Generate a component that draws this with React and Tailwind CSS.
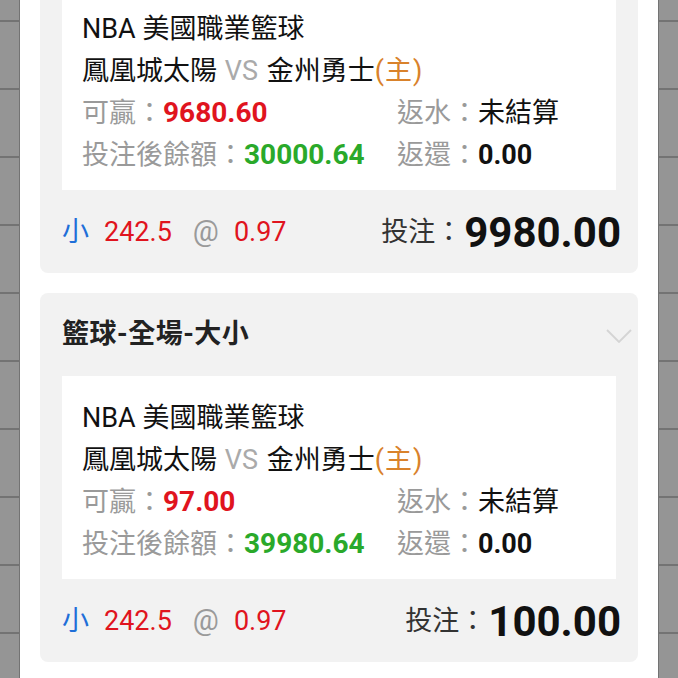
import React from "react";

const bets = [
	{ win: "9680.60", balance: "30000.64", stake: "9980.00" },
	{ win: "97.00", balance: "39980.64", stake: "100.00" },
];

const Strip = ({ side }) => (
	<div
		className={
			side === "left"
				? "w-[20px] h-full shrink-0 bg-[rgb(149,149,149)] border-r border-neutral-500"
				: "w-[20px] h-full shrink-0 bg-[rgb(149,149,149)] border-l border-neutral-500"
		}
	>
		<div className="h-[22px] border-b-2 border-neutral-500" />
		{Array.from({ length: 10 }).map((_, i) => (
			<div key={i} className="h-[68px] border-b-2 border-neutral-500" />
		))}
	</div>
);

const BetCard = ({ bet }) => (
	<div className="bg-[#f2f2f2] rounded-lg">
		<div className="h-[83px] flex items-center justify-between pl-[22px] pr-[6px]">
			<span className="text-[27px] font-bold text-[#222] tracking-[0.5px]">籃球-全場-大小</span>
			<svg width="26" height="14" viewBox="0 0 26 14" fill="none" className="mt-[2px]">
				<path d="M1 1 L13 13 L25 1" stroke="#d4d4d4" strokeWidth="1.8" />
			</svg>
		</div>
		<div className="mx-[22px] bg-white pl-[20px] pt-[21px] pb-[14px] text-[27px] leading-[42px]">
			<div className="text-[#111]">NBA 美國職業籃球</div>
			<div className="text-[#111]">
				鳳凰城太陽 <span className="text-[#aaa] ml-[1px] mr-[2px]">VS</span> 金州勇士
				<span className="text-[#d9822b] tracking-[1px]">(主)</span>
			</div>
			<div className="flex">
				<div className="w-[315px] text-[#9a9a9a]">
					可贏：<span className="font-bold text-[28px] text-[#e0141e]">{bet.win}</span>
				</div>
				<div className="text-[#9a9a9a]">
					返水：<span className="text-[#111]">未結算</span>
				</div>
			</div>
			<div className="flex">
				<div className="w-[315px] text-[#9a9a9a]">
					投注後餘額：<span className="font-bold text-[28px] text-[#2aa92a]">{bet.balance}</span>
				</div>
				<div className="text-[#9a9a9a]">
					返還：<span className="font-bold text-[#111]">0.00</span>
				</div>
			</div>
		</div>
		<div className="h-[83px] flex items-center justify-between pl-[22px] pr-[17px] pt-[1px] text-[27px]">
			<div className="flex items-center gap-[15px]">
				<span className="text-[#1f6fd8]">小</span>
				<span className="text-[#e0141e] mr-[6px]">242.5</span>
				<span className="text-[#9a9a9a] text-[29px]">@</span>
				<span className="text-[#e0141e]">0.97</span>
			</div>
			<div className="flex items-center">
				<span className="text-[#333]">投注：</span>
				<span className="text-[42px] font-bold text-[#111] ml-[2px]">{bet.stake}</span>
			</div>
		</div>
	</div>
);

export default function App() {
	return (
		<div
			className="h-[678px] w-[678px] overflow-hidden flex bg-neutral-400"
			style={{ fontFamily: '"Roboto", "Noto Sans CJK TC", sans-serif' }}
		>
			<Strip side="left" />
			<div className="flex-1 bg-white px-[20px]">
				<div className="-mt-[96px] flex flex-col gap-[20px]">
					{bets.map((b, i) => (
						<BetCard key={i} bet={b} />
					))}
				</div>
			</div>
			<Strip side="right" />
		</div>
	);
}
